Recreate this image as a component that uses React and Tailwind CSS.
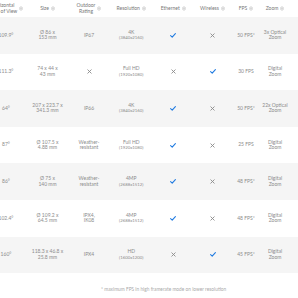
import React from "react";

const Sort = () => (
  <svg width="4" height="5" viewBox="0 0 4 5" className="ml-[2px] inline-block shrink-0">
    <path d="M2 0.4 L3.6 2.1 H0.4 Z M2 4.6 L3.6 2.9 H0.4 Z" fill="none" stroke="#b5b5b5" strokeWidth="0.5" />
  </svg>
);

const Check = () => (
  <svg width="6" height="5" viewBox="0 0 6 5">
    <path d="M0.6 2.6 L2.2 4.1 L5.4 0.6" fill="none" stroke="#1f7ae0" strokeWidth="1.1" strokeLinecap="round" strokeLinejoin="round" />
  </svg>
);

const Cross = () => (
  <svg width="5" height="5" viewBox="0 0 5 5">
    <path d="M0.8 0.8 L4.2 4.2 M4.2 0.8 L0.8 4.2" stroke="#8a8a8a" strokeWidth="0.9" strokeLinecap="round" />
  </svg>
);

const rows = [
  ["109.9°", ["Ø 86 x", "153 mm"], ["IP67"], ["4K", "(3840x2160)"], true, false, "50 FPS*", ["3x Optical", "Zoom"]],
  ["111.3°", ["74 x 44 x", "43 mm"], null, ["Full HD", "(1920x1080)"], false, true, "30 FPS", ["Digital", "Zoom"]],
  ["64°", ["207 x 223.7 x", "341.3 mm"], ["IP66"], ["4K", "(3840x2160)"], true, false, "50 FPS*", ["22x Optical", "Zoom"]],
  ["87°", ["Ø 107.5 x", "4.88 mm"], ["Weather-", "resistant"], ["Full HD", "(1920x1080)"], true, false, "25 FPS", ["Digital", "Zoom"]],
  ["86°", ["Ø 75 x", "140 mm"], ["Weather-", "resistant"], ["4MP", "(2688x1512)"], true, false, "48 FPS*", ["Digital", "Zoom"]],
  ["102.4°", ["Ø 109.2 x", "64.5 mm"], ["IPX4,", "IK08"], ["4MP", "(2688x1512)"], true, false, "48 FPS*", ["Digital", "Zoom"]],
  ["160°", ["118.3 x 46.8 x", "25.8 mm"], ["IPX4"], ["HD", "(1600x1200)"], false, true, "45 FPS*", ["Digital", "Zoom"]],
];

const cols = "grid grid-cols-[42px_41px_42px_42.5px_41.5px_37px_30px_28px_40px]";

const Lines = ({ l, small }) => (
  <div className="flex flex-col items-center leading-[5.5px]">
    {l.map((t, i) => (
      <span key={i} className={small && i === 1 ? "text-[4.3px]" : ""}>{t}</span>
    ))}
  </div>
);

export default function App() {
  return (
    <div className="w-[298px] h-[298px] overflow-hidden bg-white text-[#8c8c8c] text-[5px]" style={{ fontFamily: "Lato, 'Open Sans', sans-serif" }}>
      <div className="-ml-[15px] w-[360px]">
        <div className={`${cols} h-[17px] items-center text-center text-[#777] leading-[5.5px]`}>
          <div className="flex items-center justify-center"><span>Horizontal<br />Field of View</span><Sort /></div>
          <div className="flex items-center justify-center"><span>Size</span><Sort /></div>
          <div className="flex items-center justify-center"><span>Outdoor<br />Rating</span><Sort /></div>
          <div className="flex items-center justify-center"><span>Resolution</span><Sort /></div>
          <div className="flex items-center justify-center"><span>Ethernet</span><Sort /></div>
          <div className="flex items-center justify-center"><span>Wireless</span><Sort /></div>
          <div className="flex items-center justify-center"><span>FPS</span><Sort /></div>
          <div className="flex items-center justify-center"><span>Zoom</span><Sort /></div>
          <div />
        </div>
        {rows.map((r, i) => (
          <div key={i} className={`${cols} h-[36.6px] items-center text-center ${i % 2 === 0 ? "bg-[#f5f5f5]" : "bg-white"}`}>
            <div>{r[0]}</div>
            <Lines l={r[1]} />
            <div className="flex justify-center">{r[2] ? <Lines l={r[2]} /> : <Cross />}</div>
            <Lines l={r[3]} small />
            <div className="flex justify-center">{r[4] ? <Check /> : <Cross />}</div>
            <div className="flex justify-center">{r[5] ? <Check /> : <Cross />}</div>
            <div>{r[6]}</div>
            <Lines l={r[7]} />
            <div />
          </div>
        ))}
        <div className="pl-[116px] pt-[13px] text-[4.8px] text-[#aaa]">* maximum FPS in high framerate mode on lower resolution</div>
      </div>
    </div>
  );
}
